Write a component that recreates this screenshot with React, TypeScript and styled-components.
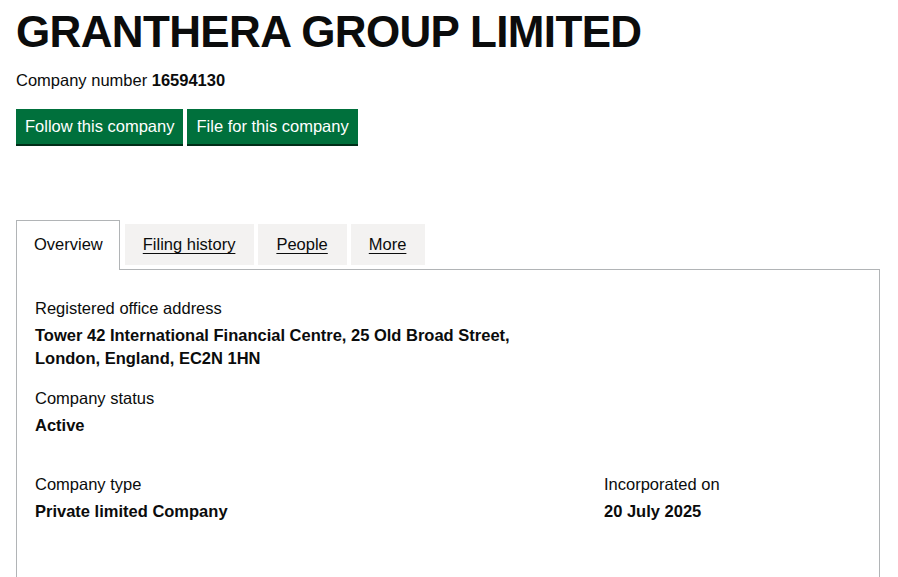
import React from 'react';
import styled, { createGlobalStyle } from 'styled-components';

const GlobalStyle = createGlobalStyle`
	html, body {
		margin: 0;
		padding: 0;
		background: #ffffff;
		color: #0b0c0c;
		font-family: 'Liberation Sans', Arial, sans-serif;
	}
`;

const Page = styled.div`
	width: 864px;
	padding: 0 18px 0 16px;
`;

const Title = styled.h1`
	margin: 7px 0 0;
	font-family: 'Liberation Sans', Arial, sans-serif;
	font-size: 44px;
	line-height: 50px;
	font-weight: 700;
	letter-spacing: -0.65px;
`;

const CompanyNumber = styled.p`
	margin: 13px 0 0;
	font-size: 16.5px;
	line-height: 20px;
	& > strong {
		font-weight: 700;
	}
`;

const Actions = styled.div`
	display: flex;
	gap: 4px;
	margin-top: 19px;
`;

const Button = styled.button`
	font-family: 'Liberation Sans', Arial, sans-serif;
	font-size: 16.5px;
	line-height: 19px;
	padding: 8px 9px;
	color: #ffffff;
	background-color: #00703c;
	border: none;
	border-radius: 0;
	box-shadow: 0 2px 0 #002d18;
	cursor: pointer;
`;

const TabList = styled.div`
	display: flex;
	align-items: flex-end;
	height: 49px;
	margin-top: 76px;
	gap: 4px;
`;

const Tab = styled.a<{ $selected?: boolean }>`
	display: flex;
	align-items: center;
	box-sizing: border-box;
	font-size: 16.5px;
	color: #0b0c0c;
	padding: ${(p) => (p.$selected ? '0 16px 2px 17px' : '0 19px 0 18px')};
	height: ${(p) => (p.$selected ? '50px' : '41px')};
	margin-bottom: ${(p) => (p.$selected ? '-1px' : '4px')};
	margin-right: ${(p) => (p.$selected ? '1px' : '0')};
	background: ${(p) => (p.$selected ? '#ffffff' : '#f3f2f1')};
	border: ${(p) => (p.$selected ? '1px solid #b1b4b6' : 'none')};
	border-bottom: none;
	text-decoration: ${(p) => (p.$selected ? 'none' : 'underline')};
	text-underline-offset: 3px;
	position: relative;
	z-index: 1;
`;

const Panel = styled.div`
	border: 1px solid #b1b4b6;
	padding: 28px 18px 80px;
`;

const Field = styled.div<{ $gap?: number }>`
	margin-top: ${(p) => p.$gap ?? 0}px;
`;

const Label = styled.div`
	font-size: 16.5px;
	line-height: 20px;
`;

const Value = styled.div`
	margin-top: 6px;
	font-size: 16.5px;
	line-height: 23px;
	font-weight: 700;
`;

const Columns = styled.div`
	display: grid;
	grid-template-columns: 569px 1fr;
	margin-top: 37px;
`;

const App = (): JSX.Element => {
	return (
		<Page>
			<GlobalStyle />
			<Title>GRANTHERA GROUP LIMITED</Title>
			<CompanyNumber>
				Company number <strong>16594130</strong>
			</CompanyNumber>
			<Actions>
				<Button>Follow this company</Button>
				<Button>File for this company</Button>
			</Actions>
			<TabList>
				<Tab $selected>Overview</Tab>
				<Tab href="#">Filing history</Tab>
				<Tab href="#">People</Tab>
				<Tab href="#">More</Tab>
			</TabList>
			<Panel>
				<Field>
					<Label>Registered office address</Label>
					<Value>
						Tower 42 International Financial Centre, 25 Old Broad Street,
						<br />
						London, England, EC2N 1HN
					</Value>
				</Field>
				<Field $gap={18}>
					<Label>Company status</Label>
					<Value>Active</Value>
				</Field>
				<Columns>
					<Field>
						<Label>Company type</Label>
						<Value>Private limited Company</Value>
					</Field>
					<Field>
						<Label>Incorporated on</Label>
						<Value>20 July 2025</Value>
					</Field>
				</Columns>
			</Panel>
		</Page>
	);
};

export default App;
